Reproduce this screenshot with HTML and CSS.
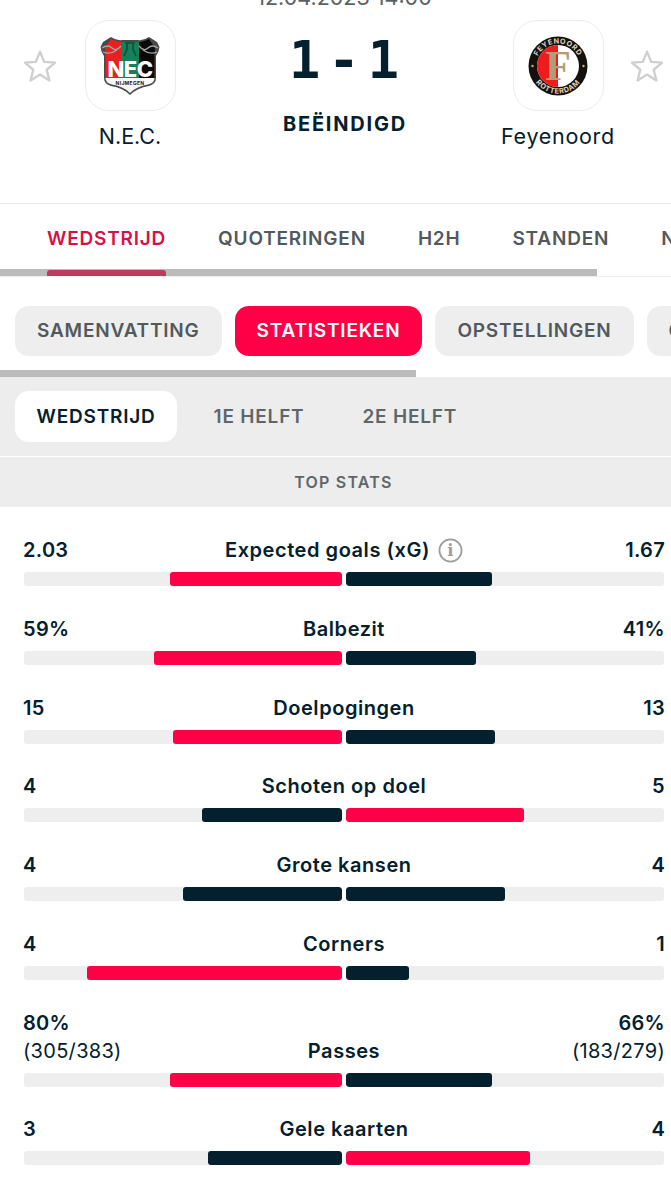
FILE: index.html
```html
<!DOCTYPE html>
<html lang="nl">
<head>
<meta charset="utf-8">
<title>N.E.C. - Feyenoord</title>
<link rel="stylesheet" href="styles.css">
</head>
<body>
<header class="match">
  <svg class="star" viewBox="1 1.5 30 29"><path d="M16 2.5l3.900 9.600 10.300.8-7.900 6.600 2.500 10L16 23.900l-8.800 5.600 2.500-10-7.900-6.600 10.300-.8z"/></svg>
  <div class="team">
    <div class="logo">
      <svg class="crest" viewBox="0 0 60 60">
        <path d="M.5 11 L3 6 L11 1 Q17 5 22 4 L38 4 Q43 5 49 1 L57 6 L59.500 11 Q59 16 56 20 L56 42 Q56 48 49 50 Q37 52 30 59 Q23 52 11 50 Q4 48 4 42 L4 20 Q1 16 .5 11Z" fill="#4a4a4a"/>
        <path d="M5 12 L11 3 Q17 6 21 6 L21 43 L5.500 43 L5.500 20Z" fill="#e8201f"/>
        <rect x="21" y="6" width="18" height="37" fill="#15815a"/>
        <path d="M39 6 Q43 6 49 3 L55 12 L54.500 20 L54.500 43 L39 43Z" fill="#0a0a0a"/>
        <path d="M5.500 42 L54.500 42 Q54.500 47 48 48.500 Q36 50.500 30 57 Q24 50.500 12 48.500 Q5.500 47 5.500 42Z" fill="#f7f7f7"/>
        <path d="M25 7h10M27 7v6l-3 7M33 7v6l3 7" fill="none" stroke="#0d4f38" stroke-width="1.600"/>
        <path d="M2 12q6-4 10 0t9-2M3 16q7 3 14-2M58 12q-6-4-10 0t-9-2M57 16q-7 3-14-2" fill="none" stroke="#a5a5a5" stroke-width="1.300"/>
        <text class="crest-nec" x="30" y="41" text-anchor="middle">NEC</text>
        <text class="crest-city" x="30" y="48.500" text-anchor="middle">NIJMEGEN</text>
      </svg>
    </div>
    <div class="team-name team-name-short">N.E.C.</div>
  </div>
  <div class="result">
    <div class="date">12.04.2023 14:00</div>
    <div class="score">1-1</div>
    <div class="status">BEËINDIGD</div>
  </div>
  <div class="team">
    <div class="logo">
      <svg class="crest" viewBox="0 0 60 60">
        <defs>
          <path id="arc-top" d="M7.500 30a22.500 22.500 0 0 1 45 0"/>
          <path id="arc-bottom" d="M2.500 30a27.500 27.500 0 0 0 55 0"/>
        </defs>
        <circle cx="30" cy="30" r="29.500" fill="#14110f"/>
        <circle cx="30" cy="30" r="21" fill="#fff"/>
        <path d="M30 9a21 21 0 0 0 0 42z" fill="#ee1c1c"/>
        <text class="ring"><textPath href="#arc-top" startOffset="50%" text-anchor="middle">FEYENOORD</textPath></text>
        <text class="ring"><textPath href="#arc-bottom" startOffset="50%" text-anchor="middle">ROTTERDAM</textPath></text>
        <circle cx="4.500" cy="30" r="1.200" fill="#c9b28a"/>
        <circle cx="55.500" cy="30" r="1.200" fill="#c9b28a"/>
        <text class="crest-f" x="30" y="44" text-anchor="middle">F</text>
      </svg>
    </div>
    <div class="team-name">Feyenoord</div>
  </div>
  <svg class="star star-right" viewBox="1 1.5 30 29"><path d="M16 2.5l3.900 9.600 10.300.8-7.900 6.600 2.500 10L16 23.900l-8.800 5.600 2.500-10-7.900-6.600 10.300-.8z"/></svg>
</header>

<nav class="tabs">
  <div class="tab tab-active">WEDSTRIJD</div>
  <div class="tab">QUOTERINGEN</div>
  <div class="tab">H2H</div>
  <div class="tab">STANDEN</div>
  <div class="tab">NIEUWS</div>
  <div class="scrollbar scrollbar-tabs"></div>
</nav>

<nav class="pills">
  <div class="pill">SAMENVATTING</div>
  <div class="pill pill-active">STATISTIEKEN</div>
  <div class="pill">OPSTELLINGEN</div>
  <div class="pill">COMMENTAAR</div>
  <div class="scrollbar scrollbar-pills"></div>
</nav>

<section class="periods">
  <div class="period period-active">WEDSTRIJD</div>
  <div class="period">1E HELFT</div>
  <div class="period">2E HELFT</div>
</section>
<div class="stats-title">TOP STATS</div>

<main class="stats">
  <div class="stat">
    <div class="stat-head"><div class="val">2.03</div><div class="label">Expected goals (xG)<svg class="info" viewBox="0 0 26 26"><circle cx="13" cy="13" r="11.500"/><text x="13" y="19" text-anchor="middle">i</text></svg></div><div class="val val-r">1.67</div></div>
    <div class="bars"><div class="track track-l"><div class="fill red" style="width:172px"></div></div><div class="track"><div class="fill dark" style="width:146px"></div></div></div>
  </div>
  <div class="stat">
    <div class="stat-head"><div class="val">59%</div><div class="label">Balbezit</div><div class="val val-r">41%</div></div>
    <div class="bars"><div class="track track-l"><div class="fill red" style="width:188px"></div></div><div class="track"><div class="fill dark" style="width:130px"></div></div></div>
  </div>
  <div class="stat">
    <div class="stat-head"><div class="val">15</div><div class="label">Doelpogingen</div><div class="val val-r">13</div></div>
    <div class="bars"><div class="track track-l"><div class="fill red" style="width:169px"></div></div><div class="track"><div class="fill dark" style="width:149px"></div></div></div>
  </div>
  <div class="stat">
    <div class="stat-head"><div class="val">4</div><div class="label">Schoten op doel</div><div class="val val-r">5</div></div>
    <div class="bars"><div class="track track-l"><div class="fill dark" style="width:140px"></div></div><div class="track"><div class="fill red" style="width:178px"></div></div></div>
  </div>
  <div class="stat">
    <div class="stat-head"><div class="val">4</div><div class="label">Grote kansen</div><div class="val val-r">4</div></div>
    <div class="bars"><div class="track track-l"><div class="fill dark" style="width:159px"></div></div><div class="track"><div class="fill dark" style="width:159px"></div></div></div>
  </div>
  <div class="stat">
    <div class="stat-head"><div class="val">4</div><div class="label">Corners</div><div class="val val-r">1</div></div>
    <div class="bars"><div class="track track-l"><div class="fill red" style="width:255px"></div></div><div class="track"><div class="fill dark" style="width:63px"></div></div></div>
  </div>
  <div class="stat">
    <div class="stat-head"><div class="val">80%<div class="sub">(305/383)</div></div><div class="label">Passes</div><div class="val val-r">66%<div class="sub">(183/279)</div></div></div>
    <div class="bars"><div class="track track-l"><div class="fill red" style="width:172px"></div></div><div class="track"><div class="fill dark" style="width:146px"></div></div></div>
  </div>
  <div class="stat">
    <div class="stat-head"><div class="val">3</div><div class="label">Gele kaarten</div><div class="val val-r">4</div></div>
    <div class="bars"><div class="track track-l"><div class="fill dark" style="width:134px"></div></div><div class="track"><div class="fill red" style="width:184px"></div></div></div>
  </div>
</main>
</body>
</html>
```

FILE: styles.css
```css
* { box-sizing: border-box; }
html, body { height: 100%; }
body {
  margin: 0;
  height: 1200px;
  overflow: hidden;
  background: #fff;
  color: #04202e;
  font-family: Inter, "Noto Sans", "Liberation Sans", sans-serif;
}

/* match header */
.match {
  height: 204px;
  display: flex;
  align-items: flex-start;
  padding: 0 8px 0 24px;
  gap: 3px;
  border-bottom: 1px solid #e8e8e8;
  overflow: hidden;
}
.star {
  flex: none;
  width: 32px;
  height: 32px;
  margin-top: 50px;
  fill: none;
  stroke: #cfcfcf;
  stroke-width: 2.200;
  stroke-linejoin: round;
}
.star-right { margin-left: -1px; }
.team {
  flex: none;
  width: 142px;
  padding-top: 20px;
  display: flex;
  flex-direction: column;
  align-items: center;
}
.logo {
  width: 91px;
  height: 91px;
  border: 1px solid #ececec;
  border-radius: 24px;
  display: flex;
  align-items: center;
  justify-content: center;
}
.crest { width: 60px; height: 60px; }
.crest-nec { font: 800 22px Inter, sans-serif; fill: #fff; letter-spacing: -.5px; }
.crest-city { font: 700 5px Inter, sans-serif; fill: #222; letter-spacing: .3px; }
.ring { font: 700 7.200px Inter, sans-serif; fill: #e2d6be; letter-spacing: .6px; }
.crest-f { font: 700 42px "Liberation Serif", serif; fill: #b59c78; }
.team-name {
  margin-top: 12px;
  font-size: 21.500px;
  line-height: 26px;
  letter-spacing: .7px;
  color: #04202e;
}
.team-name-short { letter-spacing: 0; }
.result {
  flex: 1;
  min-width: 0;
  display: flex;
  flex-direction: column;
  align-items: center;
}
.date {
  margin-top: -14px;
  font-size: 21.500px;
  line-height: 22px;
  color: #5a6266;
  white-space: nowrap;
}
.score {
  margin-top: 20px;
  font: 700 52px/64px "DejaVu Sans Mono", monospace;
  letter-spacing: 8px;
  padding-left: 8px;
  color: #04202e;
}
.status {
  margin-top: 20px;
  font-size: 20px;
  line-height: 24px;
  font-weight: 700;
  letter-spacing: 1.800px;
  padding-left: 2px;
}

/* primary tabs */
.tabs {
  position: relative;
  height: 73px;
  display: flex;
  gap: 52px;
  padding-left: 47px;
  border-bottom: 1px solid #ececec;
  overflow: hidden;
  white-space: nowrap;
}
.tab {
  flex: none;
  height: 72px;
  padding-top: 23px;
  font-size: 19px;
  line-height: 24px;
  font-weight: 600;
  letter-spacing: .8px;
  color: #52595d;
}
.tab-active {
  color: #d90f48;
  position: relative;
}
.tab-active::after {
  content: "";
  position: absolute;
  left: 0;
  right: 0;
  bottom: 0;
  height: 6px;
  border-radius: 3px 3px 0 0;
  background: #ff0046;
}
.scrollbar {
  position: absolute;
  left: 0;
  height: 7px;
  background: rgba(120, 120, 120, .5);
}
.scrollbar-tabs { bottom: 0; width: 597px; }
.scrollbar-pills { bottom: 0; width: 416px; }

/* sub tabs */
.pills {
  position: relative;
  height: 100px;
  display: flex;
  gap: 13px;
  padding: 29px 0 0 15px;
  overflow: hidden;
  white-space: nowrap;
}
.pill {
  flex: none;
  height: 50px;
  padding: 0 22px;
  border-radius: 14px;
  background: #eeeeee;
  font-size: 19px;
  line-height: 50px;
  font-weight: 600;
  letter-spacing: .8px;
  color: #52595d;
}
.pill-active {
  background: #ff0046;
  color: #fff;
}

/* period switch */
.periods {
  height: 80px;
  display: flex;
  gap: 15px;
  padding: 14px 0 0 15px;
  background: #ededed;
  border-bottom: 1px solid #fff;
}
.period {
  height: 51px;
  padding: 0 21.500px;
  border-radius: 14px;
  font-size: 19px;
  line-height: 51px;
  font-weight: 600;
  letter-spacing: .8px;
  color: #5f6669;
}
.period-active {
  background: #fff;
  color: #04202e;
}
.stats-title {
  height: 50px;
  padding-left: 16px;
  background: #ededed;
  text-align: center;
  font-size: 16px;
  line-height: 50px;
  font-weight: 600;
  letter-spacing: 1.200px;
  color: #5f6669;
}

/* statistics */
.stats { padding: .25px 6px 0 23px; }
.stat { padding-top: 29.750px; }
.stat-head {
  display: flex;
  align-items: flex-end;
  justify-content: space-between;
  position: relative;
  min-height: 27px;
}
.val {
  font-size: 20px;
  line-height: 27px;
  font-weight: 600;
  letter-spacing: .3px;
  color: #04202e;
  position: relative;
  z-index: 1;
}
.val-r { text-align: right; }
.sub { font-weight: 400; line-height: 28px; }
.label {
  position: absolute;
  left: 0;
  right: 0;
  bottom: 0;
  display: flex;
  align-items: center;
  justify-content: center;
  gap: 8px;
  font-size: 20px;
  line-height: 27px;
  font-weight: 600;
  letter-spacing: .55px;
  color: #04202e;
}
.info {
  width: 25px;
  height: 25px;
  fill: none;
  stroke: #9c9c9c;
  stroke-width: 1.800;
}
.info text {
  font: 700 17px "DejaVu Serif", serif;
  fill: #9c9c9c;
  stroke: none;
}
.bars {
  display: flex;
  gap: 4px;
  margin: 8px 0 0 1px;
}
.track {
  width: 318px;
  height: 14px;
  border-radius: 3px;
  background: #eeeeee;
  display: flex;
  overflow: hidden;
}
.track-l { justify-content: flex-end; }
.fill { height: 100%; border-radius: 3px; }
.red { background: #ff0046; }
.dark { background: #04202e; }
```
